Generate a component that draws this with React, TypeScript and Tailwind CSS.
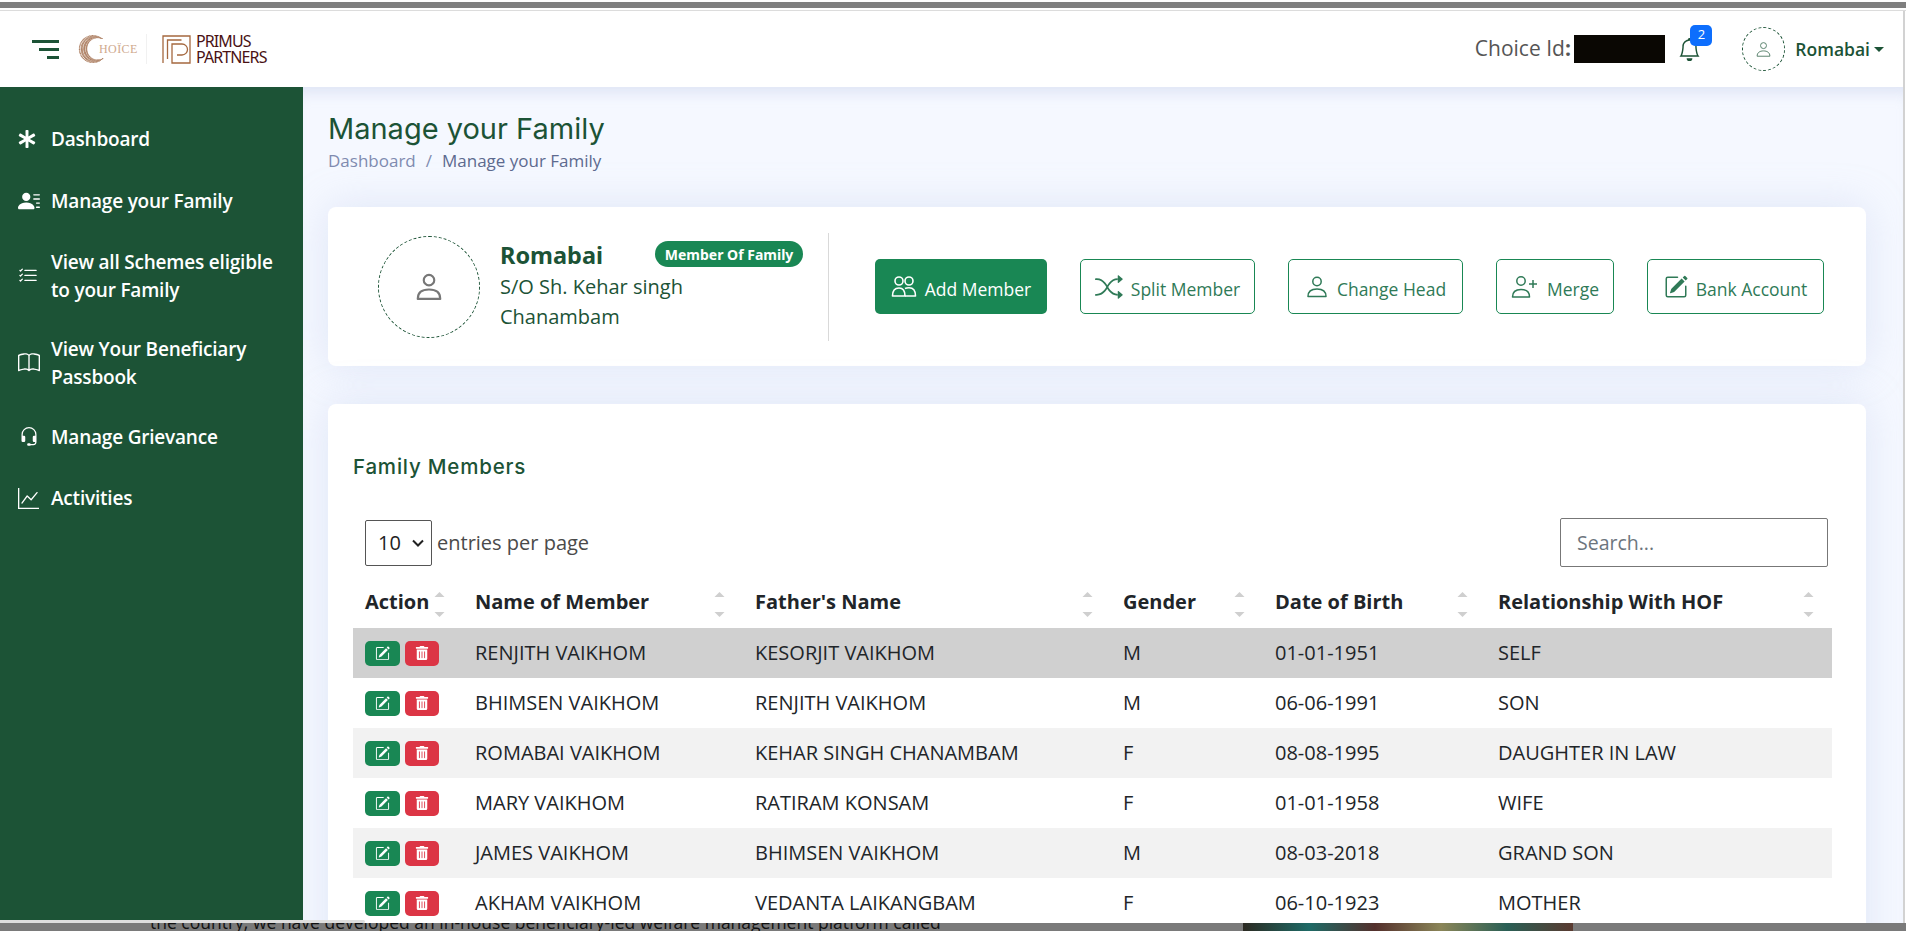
import React from "react";
import { BsPersonLinesFill, BsListCheck, BsBook, BsHeadset, BsGraphUp, BsBell, BsShuffle, BsPencilSquare } from "react-icons/bs";
import { FaTrashAlt, FaAsterisk } from "react-icons/fa";

const Person = ({ size = 24, sw = 1.5 }: { size?: number; sw?: number }) => (
  <svg width={size} height={size} viewBox="0 0 24 24" fill="none" stroke="currentColor" strokeWidth={sw}>
    <circle cx="12" cy="6.5" r="4.2" />
    <path d="M3 21.5c0-5 3.5-7.500 9-7.500s9 2.500 9 7.500z" strokeLinejoin="round" />
  </svg>
);
const People = () => (
  <svg width="26" height="24" viewBox="0 0 26 24" fill="none" stroke="currentColor" strokeWidth="1.6">
    <circle cx="8" cy="6" r="4" /><circle cx="18" cy="6" r="4" />
    <path d="M1.5 21c0-5 2.5-8 6.5-8s6 2.5 6 8z" strokeLinejoin="round" />
    <path d="M14 13.5c1-.5 2.500-.7 4-.7 4.500 0 6.500 3 6.500 8.200H14" strokeLinejoin="round" />
  </svg>
);
const PersonPlus = () => (
  <svg width="28" height="24" viewBox="0 0 28 24" fill="none" stroke="currentColor" strokeWidth="1.5">
    <circle cx="10" cy="6" r="4.200" />
    <path d="M1.500 22c0-5 3.500-7.500 8.500-7.500s8.500 2.500 8.500 7.500z" strokeLinejoin="round" />
    <path d="M22 5v8M18 9h8" />
  </svg>
);
const Sort = () => (
  <svg width="11" height="25" viewBox="0 0 11 25" className="shrink-0 mb-[2px]" fill="#cfcfcf">
    <path d="M5.500 0l5 5H.5z" /><path d="M5.500 25l5-5H.5z" />
  </svg>
);

const choiceDots: { x: number; y: number; r: number }[] = [];
for (let a = 50; a <= 315; a += 6) {
  const rad = (a * Math.PI) / 180;
  const f = Math.sin(((a - 50) / 265) * Math.PI);
  for (let k = 0; k < 6; k++) {
    const rr = 13.5 - k * 1.3 * f;
    choiceDots.push({ x: 15 + rr * Math.cos(rad) + (k % 2) * 0.5, y: 14 - rr * Math.sin(rad), r: 0.45 + 0.3 * f });
  }
}

const nav = [
  { i: <FaAsterisk size={18} />, t: "Dashboard", h: "h-[62px]" },
  { i: <BsPersonLinesFill size={22} />, t: "Manage your Family", h: "h-[62px]" },
  { i: <BsListCheck size={20} />, t: "View all Schemes eligible to your Family", h: "h-[87px]" },
  { i: <BsBook size={22} />, t: "View Your Beneficiary Passbook", h: "h-[87px]" },
  { i: <BsHeadset size={20} className="ml-[1px]" />, t: "Manage Grievance", h: "h-[62px]" },
  { i: <BsGraphUp size={21} />, t: "Activities", h: "h-[60px]" },
];

const rows = [
  ["RENJITH VAIKHOM", "KESORJIT VAIKHOM", "M", "01-01-1951", "SELF"],
  ["BHIMSEN VAIKHOM", "RENJITH VAIKHOM", "M", "06-06-1991", "SON"],
  ["ROMABAI VAIKHOM", "KEHAR SINGH CHANAMBAM", "F", "08-08-1995", "DAUGHTER IN LAW"],
  ["MARY VAIKHOM", "RATIRAM KONSAM", "F", "01-01-1958", "WIFE"],
  ["JAMES VAIKHOM", "BHIMSEN VAIKHOM", "M", "08-03-2018", "GRAND SON"],
  ["AKHAM VAIKHOM", "VEDANTA LAIKANGBAM", "F", "06-10-1923", "MOTHER"],
];
const heads = [
  ["Action", "w-[110px]"],
  ["Name of Member", "w-[280px]"],
  ["Father's Name", "w-[368px]"],
  ["Gender", "w-[152px]"],
  ["Date of Birth", "w-[223px]"],
  ["Relationship With HOF", "w-[346px]"],
];

const OutBtn = ({ icon, label, w }: { icon: React.ReactNode; label: string; w: string }) => (
  <button className={`${w} h-[55px] flex items-center justify-center gap-2 rounded-[5px] border border-[#198754] bg-white text-[#2f7a57] text-[17.5px]`}>
    {icon}<span className="pt-[6px]">{label}</span>
  </button>
);

export default function App() {
  return (
    <div className="h-[931px] w-[1906px] overflow-hidden flex flex-col bg-white font-['Open_Sans',sans-serif]">
      <div className="h-[2px] bg-white shrink-0" />
      <div className="h-[6px] bg-[#7f7f7f] shrink-0" />
      <div className="h-[2px] bg-white shrink-0" />
      <div className="h-[1px] bg-[#dcdcdc] shrink-0" />
      <div className="flex-1 min-h-0 flex flex-col border-r-[2px] border-[#d2d2d2] mr-[1px] relative">
        <header className="h-[76px] shrink-0 flex items-center pl-[32px] pr-[19px] bg-white">
          <div className="flex flex-col items-end gap-[5px] w-[27px]">
            <div className="h-[3px] w-full bg-[#1c5336]" />
            <div className="h-[3px] w-[20px] bg-[#1c5336]" />
            <div className="h-[3px] w-[12px] bg-[#1c5336]" />
          </div>
          <div className="ml-[19px] flex items-center w-[58px]">
            <svg width="26" height="28" viewBox="0 0 26 28" className="shrink-0" fill="#b08468">
              {choiceDots.map((d, i) => <circle key={i} cx={d.x} cy={d.y} r={d.r} />)}
            </svg>
            <span className="font-['Liberation_Serif',serif] text-[12px] text-[#cfa98d] -ml-[5px] tracking-[0.4px]">HOÏCE</span>
          </div>
          <div className="ml-[10px] h-[30px] w-px bg-[#f1f1f1]" />
          <svg width="29" height="29" viewBox="0 0 29 29" className="ml-[15px] shrink-0" fill="none" stroke="#a5683f" strokeWidth="1.300">
            <path d="M1 28V1h27v27H10V9h10a5 5 0 010 11h-5" />
            <path d="M5.500 24V5h14" />
          </svg>
          <div className="ml-[5px] text-[16px] leading-[16px] tracking-[-0.9px] text-[#4a1114] font-['Noto_Sans',sans-serif]">
            <div>PRIMUS</div><div>PARTNERS</div>
          </div>
          <div className="ml-auto flex items-center">
            <span className="text-[21px] text-[#555]">Choice Id<b className="font-bold">:</b> <span className="font-bold">1</span></span>
            <div className="h-[28px] w-[91px] bg-[#0a0703] -ml-[14px]" />
            <div className="relative ml-[13px] text-[#1c5336]">
              <BsBell size={23} />
              <span className="absolute -top-[13px] left-[12px] w-[22px] h-[21px] rounded-[5px] bg-[#0d6efd] text-white text-[13px] flex items-center justify-center">2</span>
            </div>
            <div className="ml-[41px] w-[43px] h-[44px] rounded-full border border-dashed border-[#1c5336] flex items-center justify-center text-[#4f7a63]">
              <Person size={17} sw={1.3} />
            </div>
            <span className="ml-[10px] text-[#1c5336] text-[17.5px] font-semibold">Romabai</span>
            <span className="ml-[4px] w-0 h-0 border-x-[5px] border-x-transparent border-t-[5px] border-t-[#1c5336]" />
          </div>
        </header>
        <div className="flex flex-1 min-h-0">
          <aside className="w-[303px] shrink-0 bg-[#1c5336] text-white pt-[21px] pl-[18px] pr-[20px]">
            {nav.map((n) => (
              <div key={n.t} className={`${n.h} flex items-center`}>
                <span className="w-[33px] shrink-0 flex items-center">{n.i}</span>
                <span className="text-[19px] leading-[28px] font-semibold tracking-[-0.2px]">{n.t}</span>
              </div>
            ))}
          </aside>
          <main className="flex-1 min-w-0 bg-[#f5f8ff] shadow-[inset_0_14px_14px_-8px_rgba(190,200,230,0.4)] pl-[25px] pr-[37px] pt-[24px] overflow-hidden">
            <h1 className="text-[29px] leading-[36px] text-[#1c5336] font-normal font-['Inter',sans-serif]">Manage your Family</h1>
            <div className="mt-[2px] text-[17px] leading-[24px] flex gap-[10px]">
              <span className="text-[#7f8bb0]">Dashboard</span><span className="text-[#7f8bb0]">/</span><span className="text-[#5d6a8f]">Manage your Family</span>
            </div>
            <section className="mt-[34px] h-[159px] rounded-[8px] bg-white flex items-center pl-[50px] shadow-[0_0_40px_rgba(180,195,230,0.35)]">
              <div className="w-[102px] h-[102px] rounded-full border border-dashed border-[#1c5336] flex items-center justify-center text-[#777] shrink-0">
                <Person size={30} sw={1.7} />
              </div>
              <div className="ml-[20px] w-[329px] text-[#1c5336]">
                <div className="flex items-center h-[28px]">
                  <span className="text-[23.5px] font-bold font-['Noto_Sans',sans-serif]">Romabai</span>
                  <span className="ml-[52px] h-[26px] w-[148px] -mt-[3px] rounded-full bg-[#198754] text-white text-[14px] font-bold flex items-center justify-center font-['Noto_Sans',sans-serif]">Member Of Family</span>
                </div>
                <div className="text-[20px] leading-[30px] mt-[2px] w-[240px]">S/O Sh. Kehar singh Chanambam</div>
              </div>
              <div className="h-[108px] w-px bg-[#d9d9d9] -ml-[1px]" />
              <div className="ml-[46px] flex items-center gap-[33px]">
                <button className="w-[172px] h-[55px] flex items-center justify-center gap-2 rounded-[5px] bg-[#198754] text-white text-[17.5px]"><People /><span className="pt-[6px]">Add Member</span></button>
                <OutBtn w="w-[175px]" icon={<BsShuffle size={28} />} label="Split Member" />
                <OutBtn w="w-[175px]" icon={<Person size={24} />} label="Change Head" />
                <OutBtn w="w-[118px]" icon={<PersonPlus />} label="Merge" />
                <OutBtn w="w-[177px]" icon={<BsPencilSquare size={24} />} label="Bank Account" />
              </div>
            </section>
            <section className="mt-[38px] rounded-[8px] bg-white pt-[49px] px-[25px] pb-4 h-[600px] shadow-[0_0_40px_rgba(180,195,230,0.35)]">
              <h2 className="text-[20.5px] leading-[28px] tracking-[0.8px] text-[#1c5336] font-medium font-['Inter',sans-serif]">Family Members</h2>
              <div className="mt-[37px] pl-[12px] pr-[13px] flex items-center justify-between">
                <div className="flex items-center">
                  <div className="w-[67px] h-[46px] border border-[#555] rounded-[2px] flex items-center pl-[12px] gap-[11px] text-[20px] text-[#222]">
                    10
                    <svg width="12" height="8" viewBox="0 0 12 8" fill="none" stroke="#222" strokeWidth="2"><path d="M1 1.500l5 5 5-5" /></svg>
                  </div>
                  <span className="ml-[5px] text-[20px] text-[#4a4a4a]">entries per page</span>
                </div>
                <div className="w-[268px] h-[49px] border border-[#777] rounded-[2px] flex items-center pl-[16px] text-[19.5px] text-[#6c757d]">Search...</div>
              </div>
              <div className="mt-[16px] w-[1479px]">
                <div className="flex h-[45px]">
                  {heads.map(([h, w]) => (
                    <div key={h} className={`${w} flex items-center justify-between pl-[12px] pr-[18px] text-[20px] font-bold text-[#212529] whitespace-nowrap`}>
                      <span className="pb-[7px]">{h}</span><Sort />
                    </div>
                  ))}
                </div>
                {rows.map((r, i) => (
                  <div key={r[0]} className={`flex h-[50px] items-center text-[20px] text-[#212529] ${i === 0 ? "bg-[#d0d0d0]" : i % 2 === 0 ? "bg-[#f2f2f2]" : "bg-white"}`}>
                    <div className="w-[110px] pl-[12px] flex gap-[5px]">
                      <span className="w-[35px] h-[25px] rounded-[5px] bg-[#198754] text-white flex items-center justify-center"><BsPencilSquare size={15} /></span>
                      <span className="w-[34px] h-[25px] rounded-[5px] bg-[#dc3545] text-white flex items-center justify-center"><FaTrashAlt size={14} /></span>
                    </div>
                    <div className="w-[280px] pl-[12px]">{r[0]}</div>
                    <div className="w-[368px] pl-[12px]">{r[1]}</div>
                    <div className="w-[152px] pl-[12px]">{r[2]}</div>
                    <div className="w-[223px] pl-[12px]">{r[3]}</div>
                    <div className="w-[346px] pl-[12px]">{r[4]}</div>
                  </div>
                ))}
              </div>
            </section>
          </main>
        </div>
        <div className="absolute left-0 bottom-0 h-[3px] w-[365px] rounded-r-full bg-[#dedede]" />
      </div>
      <div className="h-[8px] shrink-0 bg-[#7a7a7a] relative overflow-hidden">
        <span className="absolute left-[150px] -top-[5px] text-[17.5px] leading-[8px] text-[#111] whitespace-nowrap">the country, we have developed an in-house beneficiary-led welfare management platform called</span>
        <div className="absolute left-[1243px] top-0 h-[8px] w-[330px] bg-[linear-gradient(90deg,#2c2a22,#1e6a66,#54302c,#8a8558,#2a5f55,#5a3a30)]" />
      </div>
    </div>
  );
}
